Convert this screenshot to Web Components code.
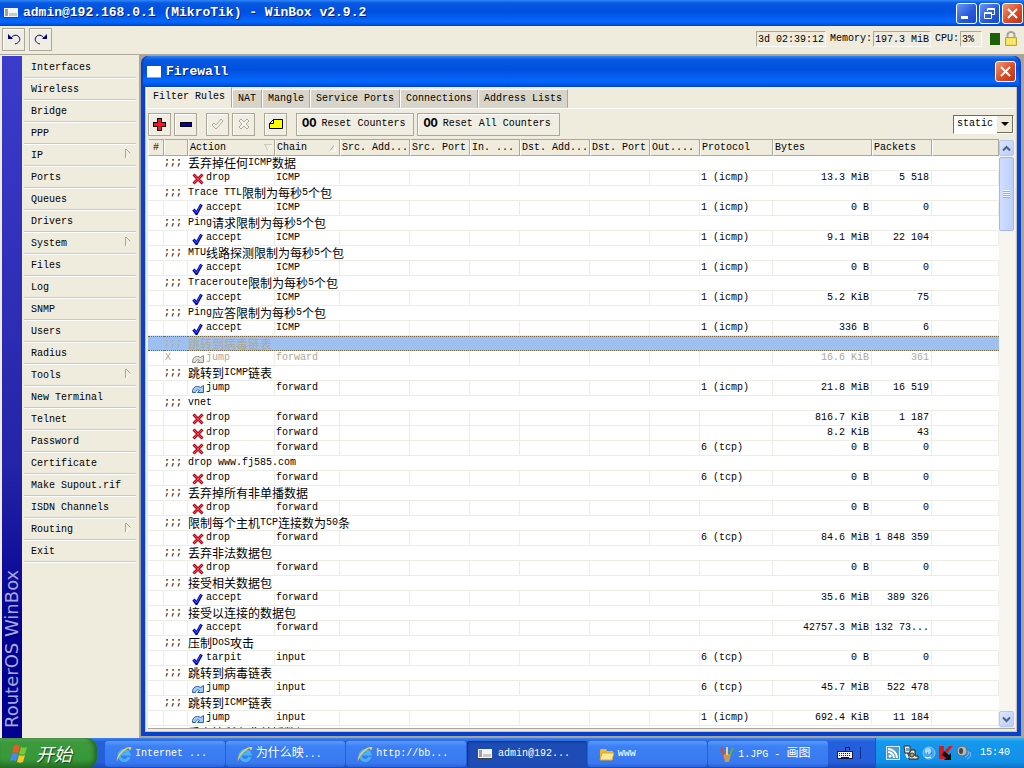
<!DOCTYPE html>
<html lang="zh-CN">
<head>
<meta charset="utf-8">
<title>admin@192.168.0.1 (MikroTik) - WinBox v2.9.2</title>
<style>
html, body { margin: 0; height: 100%; overflow: hidden; }
body { font: 10px/14px "Liberation Mono", "Noto Sans CJK SC", monospace; color: #000; background: #ece9d8; }
</style>
</head>
<body>
<winbox-app></winbox-app>
<script>
const esc = s => s.replace(/&/g, '&amp;').replace(/</g, '&lt;');
// Chinese runs take a 12px cell beside the 6px Latin cell
const mix = s => esc(s).replace(/[\u3000-\u9fff]+/g, m => `<span class="zh">${m}</span>`);
const BASE = `*{box-sizing:border-box}button,select{font:inherit;color:inherit;margin:0;padding:0;border:0;background:none}
.zh{font:12px/12px "Noto Sans CJK SC",sans-serif}svg{display:block;flex:none}a{color:inherit;text-decoration:none}`;

const svg = (w, h, body, crisp) => `<svg width="${w}" height="${h}" viewBox="0 0 ${w} ${h}"${crisp ? ' shape-rendering="crispEdges"' : ''} aria-hidden="true">${body}</svg>`;
const ICON = {
  undo: svg(14, 12, '<path d="M1 1v5h5z" fill="#000080"/><path d="M4 5C6 2 10 1 12 4c2 3 0 6-4 7" fill="none" stroke="#000080"/>'),
  redo: svg(14, 12, '<path d="M13 1v5H8z" fill="#000080"/><path d="M10 5C8 2 4 1 2 4c-2 3 0 6 4 7" fill="none" stroke="#000080"/>'),
  plus: svg(13, 13, '<path d="M4 0h5v4h4v5H9v4H4V9H0V4h4z" fill="#000"/><path d="M5 1h3v4h4v3H8v4H5V8H1V5h4z" fill="#f01824"/>', 1),
  minus: svg(13, 13, '<path d="M1 4h12v5H1z" fill="#000"/><path d="M2 5h10v3H2z" fill="#0000b8"/>', 1),
  okOff: svg(13, 12, '<path d="M1 7l2-2 2 2 5-6 2 2-7 8z" fill="#f6f4ea" stroke="#aca899"/>'),
  xOff: svg(12, 12, '<path d="M1 3l2-2 3 3 3-3 2 2-3 3 3 3-2 2-3-3-3 3-2-2 3-3z" fill="#f6f4ea" stroke="#aca899"/>'),
  note: svg(14, 12, '<path d="M4.500 1.500h9v9H.5v-5z" fill="#ffff00" stroke="#000"/><path d="M4.500 1.500v4h-4z" fill="#fff" stroke="#000"/>'),
  drop: svg(12, 12, '<path d="M1.500 1.500l9 9M10.500 1.500l-9 9" stroke="#b00c20" stroke-width="3"/><path d="M1.500 1.500l9 9M10.500 1.500l-9 9" stroke="#f84850"/>'),
  accept: svg(12, 12, '<path d="M1.500 6.500l3 4 5-9" fill="none" stroke="#0000a8" stroke-width="3"/><path d="M2 7l2.500 3 4.500-8" fill="none" stroke="#4860f8"/>'),
  jump: svg(12, 12, '<path d="M.5 9.500C0 4 5 2 8.500 4.500l3-2v7h-6l2-2C5.500 6 4 7 3.500 9.500z" fill="#a4ccf8" stroke="#2860a0"/>'),
  jumpOff: svg(12, 12, '<path d="M.5 9.500C0 4 5 2 8.500 4.500l3-2v7h-6l2-2C5.500 6 4 7 3.500 9.500z" fill="#e0e0d8" stroke="#8c8c84"/>'),
  app: svg(14, 12, '<path d="M0 1h14v9H0z" fill="#f4f4f4"/><path d="M1 2h3v7H1z" fill="#a0a0a0"/><path d="M5 6h8v3H5z" fill="#c8c8c8"/><path d="M0 10h14v1H0z" fill="#404040"/>', 1),
  win: svg(14, 12, '<path d="M0 0h14v11H0z" fill="#fff"/><path d="M0 11h14v1H0z" fill="#90a8c8"/>', 1),
  lock: svg(14, 16, '<path d="M3.500 7V4a3.500 3 0 0 1 7 0v3" fill="none" stroke="#a4a498" stroke-width="2"/><path d="M1.500 6.500h11v8h-11z" fill="#f4dc50" stroke="#b8a83c"/><path d="M4 8v5M7 8v5M10 8v5" stroke="#fff8a8"/>'),
  ie: svg(16, 16, '<path d="M13 11A5 5 0 1 1 13 8H5" fill="none" stroke="#48b4f4" stroke-width="3"/><path d="M1 15C-1 11 8 0 15 1c1 2-1 3-2 4 1-2 0-3-2-2C7 5 2 11 1 15z" fill="#f8d048"/>'),
  folder: svg(16, 13, '<path d="M1 2l1-1h5l1 2h6v9H1z" fill="#e8b838"/><path d="M1 12l2-7h12l-2 7z" fill="#ffe890" stroke="#d8a830"/>'),
  paint: svg(16, 16, '<path d="M4 8h8l-2 8H6z" fill="#c89858"/><path d="M5 9L2 2" stroke="#e04828" stroke-width="2"/><path d="M8 9V1" stroke="#f0d070" stroke-width="2"/><path d="M11 9l3-7" stroke="#58b048" stroke-width="2"/>'),
  keyb: svg(16, 12, '<path d="M8 0h5v3h-1V1H9v3H8z" fill="#101838"/><path d="M0 4h16v8H0z" fill="#101838"/><path d="M1 5h14v6H1z" fill="#f4f4f4"/><path d="M2 6.500h12M2 8.500h12" stroke="#101838" stroke-dasharray="1 1"/><path d="M4 10.500h8" stroke="#101838"/>', 1),
  rss: svg(14, 14, '<path d="M0 0h14v14H0z" fill="#d8e8f8"/><path d="M1 1h12v12H1z" fill="#5898d0"/><circle cx="4" cy="10" r="1.500" fill="#fff"/><path d="M2 6a6 6 0 0 1 6 6M2 3a9 9 0 0 1 9 9" fill="none" stroke="#fff" stroke-width="2"/>'),
  net: svg(16, 16, '<path d="M1 1h6v7H2z" fill="#f0f0e8" stroke="#283038"/><path d="M3 3h3v3H3z" fill="#8098a8"/><path d="M8 5h4v6h3v3H6V9z" fill="#e8e8d8" stroke="#202018"/><circle cx="9" cy="10" r="2" fill="#b0a878" stroke="#303020"/><path d="M3 9l2 4" stroke="#fff" stroke-width="2"/>'),
  ball: svg(14, 14, '<circle cx="7" cy="7" r="6" fill="#48a8e8" stroke="#88c8f8"/><circle cx="6" cy="5" r="3" fill="#a8dcff"/><path d="M3 11l2 1 4-1" stroke="#fff" fill="none"/><path d="M5 7h1M9 7h1" stroke="#205080"/>'),
  kasp: svg(14, 14, '<path d="M0 0h5v6l5-6h4L8 7l2 3H6v3H0z" fill="#e01818"/><path d="M5 5l5 4 2-2v7H5l2-2-4-3z" fill="#101010"/>'),
  sound: svg(16, 16, '<ellipse cx="6" cy="6" rx="5" ry="5" fill="#b8b8b8" stroke="#686868"/><ellipse cx="5" cy="6" rx="2" ry="3" fill="#404850"/><path d="M9 12c3-1 4-3 3-6M11 14c4-2 4-4 3-7" stroke="#88b8f8" fill="none"/>'),
  flag: svg(20, 20, '<path d="M4 3c2-2 4-1 6 0L8 10c-2-1-4-1-6 0z" fill="#f05828"/><path d="M11 4c2 1 4 1 6 0l-2 7c-2 1-4 1-6 0z" fill="#78c838"/><path d="M2 11c2-1 4-1 6 0l-2 7c-2-1-4-1-6 0z" fill="#4888f0"/><path d="M9 12c2 1 4 1 6 0l-2 7c-2 1-4 1-6 0z" fill="#f8c828"/>')
};

class Base extends HTMLElement {
  constructor() { super(); this.attachShadow({ mode: 'open' }); }
  connectedCallback() { this.shadowRoot.innerHTML = `<style>${BASE}${this.css()}</style>${this.html()}`; }
  css() { return ''; }
  html() { return ''; }
}

customElements.define('caption-button', class extends Base {
  css() { return `:host{display:block}button{display:block;width:21px;height:21px;border:1px solid #fff;border-radius:3px;background:linear-gradient(135deg,#6c94f0,#2458dc 60%,#1c48c8)}
  .close{background:linear-gradient(135deg,#f09878,#dc4c24 55%,#b83414)}`; }
  html() {
    const k = this.getAttribute('kind');
    const p = { min: '<path d="M4 12h7v3H4z" fill="#fff"/>',
      restore: '<path d="M7.500 7V4.500h7v6H12M7 5.500h8" fill="none" stroke="#fff"/><path d="M4.500 8.500h7v6h-7zM4 9.500h8" fill="none" stroke="#fff"/>',
      close: '<path d="M5 5l9 9M14 5l-9 9" stroke="#fff" stroke-width="2"/>' }[k];
    return `<button class="${k}" aria-label="${k}">${svg(19, 19, p)}</button>`;
  }
});

customElements.define('title-bar', class extends Base {
  css() { return `:host{display:flex;align-items:center;gap:5px;flex:none;color:#fff;
    background:linear-gradient(#2f86f8 0,#0858e0 12%,#0050e0 45%,#0468fc 82%,#0058e8 92%,#0040c0)}
    h1{flex:1;margin:0;font:bold 13px/16px "Liberation Mono",monospace;text-shadow:1px 1px #0a1c70;white-space:nowrap;overflow:hidden}
    .b{display:flex;gap:2px}`; }
  html() { return `${ICON[this.getAttribute('icon')]}<h1>${esc(this.getAttribute('label'))}</h1><div class="b"><slot></slot></div>`; }
});

customElements.define('tool-button', class extends Base {
  css() { return `:host{display:block;flex:none}button{display:flex;align-items:center;justify-content:center;gap:5px;min-width:23px;height:23px;
    border:1px solid #aca899;box-shadow:inset 1px 1px #fff;background:#f0eee2;white-space:nowrap}
    .wide{padding:0 8px 0 5px}b{font-size:12px;line-height:14px}span{line-height:16px}`; }
  html() {
    const l = this.getAttribute('label'), i = this.getAttribute('icon');
    return l ? `<button class="wide"><b>OO</b><span>${l}</span></button>` : `<button aria-label="${i}"${i.endsWith('Off') ? ' disabled' : ''}>${ICON[i]}</button>`;
  }
});

customElements.define('status-bar', class extends Base {
  css() { return `:host{display:flex;align-items:center;gap:4px;height:29px;flex:none;padding:0 6px 2px 2px;background:#efecde;border-bottom:1px solid #aca899}
    .s{flex:1}.f{height:16px;padding:0 1px;border:1px solid;border-color:#aca899 #fff #fff #aca899;line-height:16px}
    .p{display:flex;align-items:center;gap:1px;line-height:18px}.cpu{width:22px}.g{width:10px;height:12px;background:#1c6008;margin-left:4px}`; }
  html() { return `<tool-button icon="undo"></tool-button><tool-button icon="redo"></tool-button><div class="s"></div>
    <div class="f">3d 02:39:12</div><div class="p"><span>Memory:</span><div class="f">197.3 MiB</div></div>
    <div class="p"><span>CPU:</span><div class="f cpu">3%</div></div><div class="g"></div>${ICON.lock}`; }
});

customElements.define('side-menu', class extends Base {
  css() { return `:host{display:flex;width:140px;flex:none;padding:1px 3px 0 2px;background:#efecde;border-right:1px solid #aca899}
    .brand{width:20px;flex:none;background:linear-gradient(to top,#3c3ccc,#2424a8 60%,#000090 85%);display:flex;align-items:center;
    writing-mode:vertical-rl;transform:rotate(180deg);font:18px/20px "DejaVu Sans",sans-serif;color:#a8a8dc;padding:10px 0 0}
    nav{flex:1;margin-left:2px;padding-top:1px}a{display:flex;height:22px;line-height:18px;padding:2px 5px 0 7px;justify-content:space-between;border-bottom:1px solid #fff;box-shadow:inset 0 -1px #cdcabb}
    svg{margin-top:2px}`; }
  html() {
    const sub = ['IP', 'System', 'Tools', 'Routing'];
    const items = ['Interfaces', 'Wireless', 'Bridge', 'PPP', 'IP', 'Ports', 'Queues', 'Drivers', 'System', 'Files', 'Log', 'SNMP', 'Users', 'Radius', 'Tools', 'New Terminal', 'Telnet', 'Password', 'Certificate', 'Make Supout.rif', 'ISDN Channels', 'Routing', 'Exit'];
    return `<div class="brand">RouterOS WinBox</div><nav>${items.map(t => `<a href="#">${t}${sub.includes(t) ? svg(6, 10, '<path d="M.5 0v9" stroke="#aca899"/><path d="M1 9l5-4.500" fill="none" stroke="#fff"/><path d="M1 0l4.500 4.500" stroke="#aca899"/>') : ''}</a>`).join('')}</nav>`;
  }
});

customElements.define('tab-strip', class extends Base {
  css() { return `:host{display:flex;align-items:flex-end;height:22px;border-bottom:1px solid #fff;flex:none}
    button{height:19px;padding:1px 5px 0;border:1px solid;border-color:#fff #aca899 transparent #fff;background:#d8d5c8;white-space:nowrap}
    [aria-selected=true]{height:21px;padding:0 6px 1px;background:#efecde}`; }
  html() { return ['Filter Rules', 'NAT', 'Mangle', 'Service Ports', 'Connections', 'Address Lists'].map((t, i) => `<button role="tab" aria-selected="${i === 0}">${t}</button>`).join(''); }
});

customElements.define('filter-bar', class extends Base {
  css() { return `:host{display:flex;align-items:center;gap:3px;height:30px;flex:none;padding:0 1px 0 2px}.gap{width:3px}.s{flex:1}
    select{appearance:none;width:61px;height:19px;padding:0 0 0 3px;border:1px solid;border-color:#706c60 #fff #fff #706c60;border-radius:0;
    background:#fff url("data:image/svg+xml,%3Csvg xmlns='http://www.w3.org/2000/svg' width='16' height='17'%3E%3Cpath d='M0 0h16v17H0z' fill='%23efecde'/%3E%3Cpath d='M15.500 0v16.500H0' fill='none' stroke='%23706c60'/%3E%3Cpath d='M4 6h8l-4 4z'/%3E%3C/svg%3E") right top no-repeat}`; }
  html() { return `<tool-button icon="plus"></tool-button><tool-button icon="minus"></tool-button><i class="gap"></i>
    <tool-button icon="okOff"></tool-button><tool-button icon="xOff"></tool-button><i class="gap"></i><tool-button icon="note"></tool-button><i class="gap"></i>
    <tool-button label="Reset Counters"></tool-button><tool-button label="Reset All Counters"></tool-button><span class="s"></span>
    <select aria-label="Rule type"><option>static</option></select>`; }
});

customElements.define('scroll-bar', class extends Base {
  css() { return `:host{display:flex;flex-direction:column;width:16px;flex:none;background:#f6f5ef}
    button{width:15px;height:16px;border:1px solid #b4c8f0;border-radius:2px;background:linear-gradient(135deg,#dce6fe,#b8ccfa);display:flex;align-items:center;justify-content:center}
    .t{height:74px;margin-top:1px;width:15px;border:1px solid #a0b8ec;border-radius:2px;background:linear-gradient(90deg,#d0defe,#bcd0fc);display:flex;align-items:center;justify-content:center}.s{flex:1}`; }
  html() { return `<button aria-label="up">${svg(9, 7, '<path d="M1 5.500l3.500-3.500L8 5.500" fill="none" stroke="#4d6185" stroke-width="2"/>')}</button>
    <div class="t">${svg(7, 8, '<path d="M0 .5h7M0 2.500h7M0 4.500h7M0 6.500h7" stroke="#eef4fe"/><path d="M0 1.500h7M0 3.500h7M0 5.500h7M0 7.500h7" stroke="#8cb0f8"/>')}</div><div class="s"></div>
    <button aria-label="down">${svg(9, 7, '<path d="M1 1.500L4.500 5 8 1.500" fill="none" stroke="#4d6185" stroke-width="2"/>')}</button>`; }
});

const R = (a, c, p, b, k, off) => ({ a, c, p, b, k, off });
const I = '1 (icmp)', T = '6 (tcp)';
const ROWS = ['丢弃掉任何ICMP数据', R('drop', 'ICMP', I, '13.3 MiB', '5 518'),
  'Trace TTL限制为每秒5个包', R('accept', 'ICMP', I, '0 B', '0'),
  'Ping请求限制为每秒5个包', R('accept', 'ICMP', I, '9.1 MiB', '22 104'),
  'MTU线路探测限制为每秒5个包', R('accept', 'ICMP', I, '0 B', '0'),
  'Traceroute限制为每秒5个包', R('accept', 'ICMP', I, '5.2 KiB', '75'),
  'Ping应答限制为每秒5个包', R('accept', 'ICMP', I, '336 B', '6'),
  '*跳转到病毒链表', R('jump', 'forward', '', '16.6 KiB', '361', 1),
  '跳转到ICMP链表', R('jump', 'forward', I, '21.8 MiB', '16 519'),
  'vnet', R('drop', 'forward', '', '816.7 KiB', '1 187'), R('drop', 'forward', '', '8.2 KiB', '43'), R('drop', 'forward', T, '0 B', '0'),
  'drop www.fj585.com', R('drop', 'forward', T, '0 B', '0'),
  '丢弃掉所有非单播数据', R('drop', 'forward', '', '0 B', '0'),
  '限制每个主机TCP连接数为50条', R('drop', 'forward', T, '84.6 MiB', '1 848 359'),
  '丢弃非法数据包', R('drop', 'forward', '', '0 B', '0'),
  '接受相关数据包', R('accept', 'forward', '', '35.6 MiB', '389 326'),
  '接受以连接的数据包', R('accept', 'forward', '', '42757.3 MiB', '132 73...'),
  '压制DoS攻击', R('tarpit', 'input', T, '0 B', '0'),
  '跳转到病毒链表', R('jump', 'input', T, '45.7 MiB', '522 478'),
  '跳转到ICMP链表', R('jump', 'input', I, '692.4 KiB', '11 184'),
  '丢弃掉所有非单播数据'];

customElements.define('rule-table', class extends Base {
  css() { return `:host{display:block;flex:1;min-width:0;overflow:hidden;background:#fff}
    table{width:100%;border-collapse:separate;border-spacing:0;table-layout:fixed}
    th{height:17px;padding:0 1px;text-align:left;font-weight:normal;line-height:14px;background:#efecde;border:1px solid;border-color:#aca899 #aca899 #aca899 #fff;white-space:nowrap}
    th:first-child{padding-left:4px}
    .sort{display:flex;justify-content:space-between;align-items:center}
    td{height:15px;padding:0 2px 0 1px;line-height:14px;border:solid #efece6;border-width:0 1px 1px 0;white-space:nowrap}
    .note td{border-right-color:transparent;padding:0}.note p{display:flex;align-items:center;height:14px;margin:0}
    .note .zh{line-height:14px}
    .act{display:flex;align-items:center;height:14px;padding-left:3px;gap:2px}.act svg{margin-top:2px}
    .n{text-align:right}.off{color:#aca899}
    .sel td{background:#9ec0f0;color:#aca899;border:dotted #786848;border-width:1px 0}.sel p{height:13px}`; }
  html() {
    const w = [16, 24, 87, 65, 70, 60, 50, 70, 60, 50, 73, 99, 60, 0];
    const h = ['#', '', 'Action', 'Chain', 'Src. Add...', 'Src. Port', 'In. ...', 'Dst. Add...', 'Dst. Port', 'Out....', 'Protocol', 'Bytes', 'Packets', ''];
    const arrow = { Action: '<path d="M0 .5h8" stroke="#cdcabb"/><path d="M1 1l3 6" stroke="#cdcabb" fill="none"/><path d="M8 1L4 7" stroke="#fff"/>', Chain: '<path d="M1 7l4-6" stroke="#aca899"/><path d="M5 1l2 6H1" stroke="#fff" fill="none"/>' };
    const row = r => {
      if (typeof r === 'string') {
        const sel = r[0] === '*';
        return `<tr class="note${sel ? ' sel' : ''}"><td></td><td><p>;;;</p></td><td colspan="12"><p>${mix(sel ? r.slice(1) : r)}</p></td></tr>`;
      }
      const ic = ICON[{ tarpit: 'accept', jump: r.off ? 'jumpOff' : 'jump' }[r.a] || r.a];
      return `<tr class="${r.off ? 'off' : ''}"><td></td><td>${r.off ? 'X' : ''}</td><td><div class="act">${ic}<span>${r.a}</span></div></td><td>${r.c}</td>${'<td></td>'.repeat(6)}<td>${r.p}</td><td class="n">${r.b}</td><td class="n">${r.k}</td><td></td></tr>`;
    };
    return `<table><colgroup>${w.map(x => `<col${x ? ` style="width:${x}px"` : ''}>`).join('')}</colgroup>
      <thead><tr>${h.map(t => `<th>${arrow[t] ? `<div class="sort"><span>${t}</span>${svg(9, 8, arrow[t])}</div>` : t}</th>`).join('')}</tr></thead><tbody>${ROWS.map(row).join('')}</tbody></table>`;
  }
});

customElements.define('firewall-window', class extends Base {
  css() { return `:host{display:flex;flex-direction:column;flex:1;min-width:0;margin:1px 3px 2px 1px;border:solid #0840d0;border-width:0 4px 4px;border-radius:7px 7px 0 0;background:#0840d0}
    title-bar{height:31px;padding:0 3px 0 4px;margin:0 -2px;border-radius:7px 7px 0 0}
    .body{flex:1;min-height:0;display:flex;flex-direction:column;background:#efecde;padding:0 1px 2px 0;border:1px solid #c8c4b0;border-width:0 1px 1px}
    .list{flex:1;min-height:0;display:flex;margin-left:2px;border-bottom:1px solid #aca899}
    scroll-bar{margin:1px 0}`; }
  html() { return `<title-bar icon="win" label="Firewall"><caption-button kind="close"></caption-button></title-bar>
    <div class="body"><tab-strip></tab-strip><filter-bar></filter-bar><div class="list"><rule-table></rule-table><scroll-bar></scroll-bar></div></div>`; }
});

customElements.define('task-bar', class extends Base {
  css() { return `:host{display:flex;height:30px;flex:none;color:#fff;background:linear-gradient(#3c84f0 0,#2460dc 12%,#245edb 80%,#1c48b0)}
    .start{display:flex;align-items:center;gap:6px;width:97px;padding-left:10px;border-radius:0 10px 10px 0;margin-right:8px;flex:none;
      background:linear-gradient(#68b468 0,#3c9a3c 15%,#389838 70%,#287028);box-shadow:inset -3px 0 4px #246824}
    .start .zh{font:italic 18px/24px "Noto Sans CJK SC",sans-serif;text-shadow:1px 1px 1px #183c18}
    .t{display:flex;flex:1;min-width:0;gap:1px;padding:3px 0 1px}
    .t button{flex:1;min-width:0;display:flex;align-items:center;gap:3px;padding-left:11px;border-radius:3px;white-space:nowrap;
      background:linear-gradient(#5c9cfc,#3c80f4 20%,#3878f0 85%,#2c64d8)}
    .t .on{background:#1c4cb4;box-shadow:inset 1px 1px 2px #103080}.t .on svg{margin-right:3px}
    .k{width:47px;display:flex;align-items:center;gap:7px;padding-left:9px;flex:none}.k i{width:1px;height:12px;background:#12308c}
    .y{display:flex;align-items:center;gap:3px;padding:0 14px 0 10px;flex:none;background:linear-gradient(#38b4f8 0,#1498ec 12%,#1290e8 80%,#0c70c0);border-left:1px solid #0c5cb0}
    .y span{margin-left:5px}`; }
  html() {
    const t = [['ie', 'Internet ...'], ['ie', '为什么映...'], ['ie', 'http://bb...'], ['app', 'admin@192...', 1], ['folder', 'www'], ['paint', '1.JPG - 画图']];
    return `<button class="start">${ICON.flag}<span class="zh">开始</span></button>
      <div class="t">${t.map(([i, s, on]) => `<button${on ? ' class="on"' : ''}>${ICON[i]}<span>${mix(s)}</span></button>`).join('')}</div>
      <div class="k">${ICON.keyb}<i></i></div>
      <div class="y">${['rss', 'net', 'ball', 'kasp', 'sound'].map(i => ICON[i]).join('')}<span>15:40</span></div>`;
  }
});

customElements.define('winbox-app', class extends Base {
  css() { return `:host{display:flex;flex-direction:column;height:100vh}
    title-bar{height:26px;padding:0 1px 0 4px}
    main{flex:1;min-height:0;display:flex;background:#a8a498}`; }
  html() { return `<title-bar icon="app" label="admin@192.168.0.1 (MikroTik) - WinBox v2.9.2"><caption-button kind="min"></caption-button><caption-button kind="restore"></caption-button><caption-button kind="close"></caption-button></title-bar>
    <status-bar></status-bar><main><side-menu></side-menu><firewall-window></firewall-window></main><task-bar></task-bar>`; }
});
</script>
</body>
</html>
